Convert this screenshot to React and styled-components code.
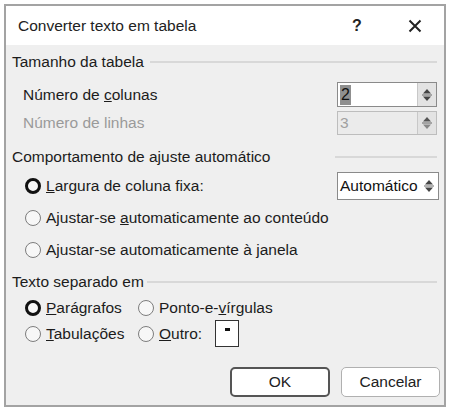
import React from 'react';
import styled, { createGlobalStyle } from 'styled-components';

const GlobalStyle = createGlobalStyle`
  body {
    margin: 0;
    background: #ffffff;
    font-family: "Liberation Sans", Arial, sans-serif;
    color: #1c1c1c;
  }
`;

const Dialog = styled.div`
  margin: 4px;
  width: 438px;
  border: 2px solid #a3a3a3;
  background: #efefef;
  font-size: 15.5px;
`;

const TitleBar = styled.div`
  height: 39px;
  background: #ffffff;
  display: flex;
  align-items: center;
  padding-left: 12px;
  box-sizing: border-box;
`;

const Title = styled.div`
  flex: 1;
  color: #222;
`;

const HelpMark = styled.div`
  width: 14px;
  font-weight: bold;
  font-size: 16px;
  margin-right: 42px;
  color: #222;
`;

const CloseBtn = styled.div`
  width: 14px;
  height: 14px;
  margin-right: 22px;
  display: flex;
`;

const Body = styled.div`
  display: flex;
  flex-direction: column;
  padding: 5px 7px 8px 6px;
`;

const GroupHeader = styled.div`
  display: flex;
  align-items: center;
  height: 24px;
  margin-top: ${p => p.$mt || 0}px;
`;

const GroupLine = styled.div`
  flex: 1;
  height: 0;
  border-top: 2px solid #d8d8d8;
  margin-left: ${p => p.$gap}px;
`;

const Row = styled.div`
  display: flex;
  align-items: center;
  justify-content: space-between;
  height: ${p => p.$h || 24}px;
  margin-top: ${p => p.$mt || 0}px;
  padding-left: ${p => p.$indent ?? 11}px;
  color: ${p => (p.$disabled ? '#9a9a9a' : 'inherit')};
`;

const SpinBox = styled.div`
  width: ${p => p.$w || 100}px;
  height: ${p => p.$h || 25}px;
  box-sizing: border-box;
  border: 1px solid ${p => (p.$disabled ? '#bdbdbd' : '#8a8a8a')};
  background: ${p => (p.$disabled ? '#ebebeb' : '#ffffff')};
  display: flex;
  margin-right: ${p => p.$mr || 0}px;
`;

const SpinValue = styled.div`
  flex: 1;
  display: flex;
  align-items: center;
  padding-left: 2px;
  color: ${p => (p.$disabled ? '#a0a0a0' : '#111')};
`;

const Selected = styled.span`
  background: #8f8f8f;
  color: #111;
  padding: 1px 1px;
  font-size: 16px;
`;

const SpinArrows = styled.div`
  width: 18px;
  display: flex;
  flex-direction: column;
  align-items: center;
  justify-content: center;
  background: ${p => (p.$plain ? 'transparent' : '#e3e3e3')};
  border-left: ${p => (p.$plain ? 'none' : '1px solid #c8c8c8')};
`;

const Radio = styled.span`
  width: 16px;
  height: 16px;
  box-sizing: border-box;
  border-radius: 50%;
  border: ${p => (p.$checked ? '3px solid #111' : '1.5px solid #7d7d7d')};
  background: #f7f7f7;
  flex-shrink: 0;
`;

const RadioItem = styled.label`
  display: flex;
  align-items: center;
  gap: 5px;
  white-space: nowrap;
`;

const RadioGrid = styled.div`
  display: grid;
  grid-template-columns: 113px auto;
  align-items: center;
  padding-left: 13px;
`;

const GridCell = styled.div`
  display: flex;
  align-items: center;
  height: ${p => p.$h || 24}px;
  margin-top: ${p => p.$mt || 0}px;
  gap: 13px;
`;

const OtherBox = styled.div`
  width: 24px;
  height: 27px;
  box-sizing: border-box;
  border: 1.5px solid #333;
  background: #fff;
  display: flex;
  justify-content: center;
  padding-top: 7px;
  &::before {
    content: '';
    width: 5px;
    height: 3px;
    background: #111;
  }
`;

const ButtonRow = styled.div`
  display: flex;
  justify-content: flex-end;
  gap: 11px;
  margin-top: 20px;
  margin-right: -3px;
`;

const Button = styled.button`
  width: ${p => p.$w || 100}px;
  height: 30px;
  box-sizing: border-box;
  background: #ffffff;
  border: ${p => (p.$primary ? '2px solid #555' : '1px solid #b0b0b0')};
  border-radius: 5px;
  font-family: "Liberation Sans", Arial, sans-serif;
  font-size: 15.5px;
  color: #222;
  padding: 0;
`;

const Arrows = ({ disabled }) => (
  <svg width="12" height="16" viewBox="0 0 12 16">
    <path d="M6 2 L10 6.5 L2 6.5 Z" fill={disabled ? '#555' : '#444'} />
    <line x1="1" y1="8" x2="11" y2="8" stroke="#666" strokeWidth="1" />
    <path d="M6 14 L10 9.5 L2 9.5 Z" fill={disabled ? '#888' : '#444'} />
  </svg>
);

const App = () => {
  return (
    <>
      <GlobalStyle />
      <Dialog>
        <TitleBar>
          <Title>Converter texto em tabela</Title>
          <HelpMark>?</HelpMark>
          <CloseBtn>
            <svg width="14" height="14" viewBox="0 0 14 14">
              <path d="M1.5 1.5 L12.5 12.5 M12.5 1.5 L1.5 12.5" stroke="#222" strokeWidth="2" />
            </svg>
          </CloseBtn>
        </TitleBar>
        <Body>
          <GroupHeader>
            Tamanho da tabela
            <GroupLine $gap={6} />
          </GroupHeader>
          <Row $h={25} $mt={8}>
            <span>Número de <u>c</u>olunas</span>
            <SpinBox>
              <SpinValue><Selected>2</Selected></SpinValue>
              <SpinArrows><Arrows /></SpinArrows>
            </SpinBox>
          </Row>
          <Row $h={24} $mt={4} $disabled>
            <span>Número de linhas</span>
            <SpinBox $h={24} $disabled>
              <SpinValue $disabled>3</SpinValue>
              <SpinArrows><Arrows disabled /></SpinArrows>
            </SpinBox>
          </Row>

          <GroupHeader $mt={10}>
            Comportamento de ajuste automático
            <GroupLine $gap={65} />
          </GroupHeader>
          <Row $h={28} $mt={3} $indent={13}>
            <RadioItem>
              <Radio $checked />
              <span><u>L</u>argura de coluna fixa:</span>
            </RadioItem>
            <SpinBox $w={102} $h={28} $mr={-2}>
              <SpinValue>Automático</SpinValue>
              <SpinArrows $plain><Arrows /></SpinArrows>
            </SpinBox>
          </Row>
          <Row $mt={6} $indent={13}>
            <RadioItem>
              <Radio />
              <span>Ajustar-se <u>a</u>utomaticamente ao conteúdo</span>
            </RadioItem>
          </Row>
          <Row $mt={8} $indent={13}>
            <RadioItem>
              <Radio />
              <span>Ajustar-se automaticamente à <u>j</u>anela</span>
            </RadioItem>
          </Row>

          <GroupHeader $mt={8}>
            Texto separado em
            <GroupLine $gap={3} />
          </GroupHeader>
          <RadioGrid>
            <GridCell $mt={2}>
              <RadioItem>
                <Radio $checked />
                <span><u>P</u>arágrafos</span>
              </RadioItem>
            </GridCell>
            <GridCell $mt={2}>
              <RadioItem>
                <Radio />
                <span>Ponto-e-<u>v</u>írgulas</span>
              </RadioItem>
            </GridCell>
            <GridCell $h={27}>
              <RadioItem>
                <Radio />
                <span><u>T</u>abulações</span>
              </RadioItem>
            </GridCell>
            <GridCell $h={27}>
              <RadioItem>
                <Radio />
                <span><u>O</u>utro:</span>
              </RadioItem>
              <OtherBox />
            </GridCell>
          </RadioGrid>

          <ButtonRow>
            <Button $primary>OK</Button>
            <Button $w={99}>Cancelar</Button>
          </ButtonRow>
        </Body>
      </Dialog>
    </>
  );
};

export default App;
